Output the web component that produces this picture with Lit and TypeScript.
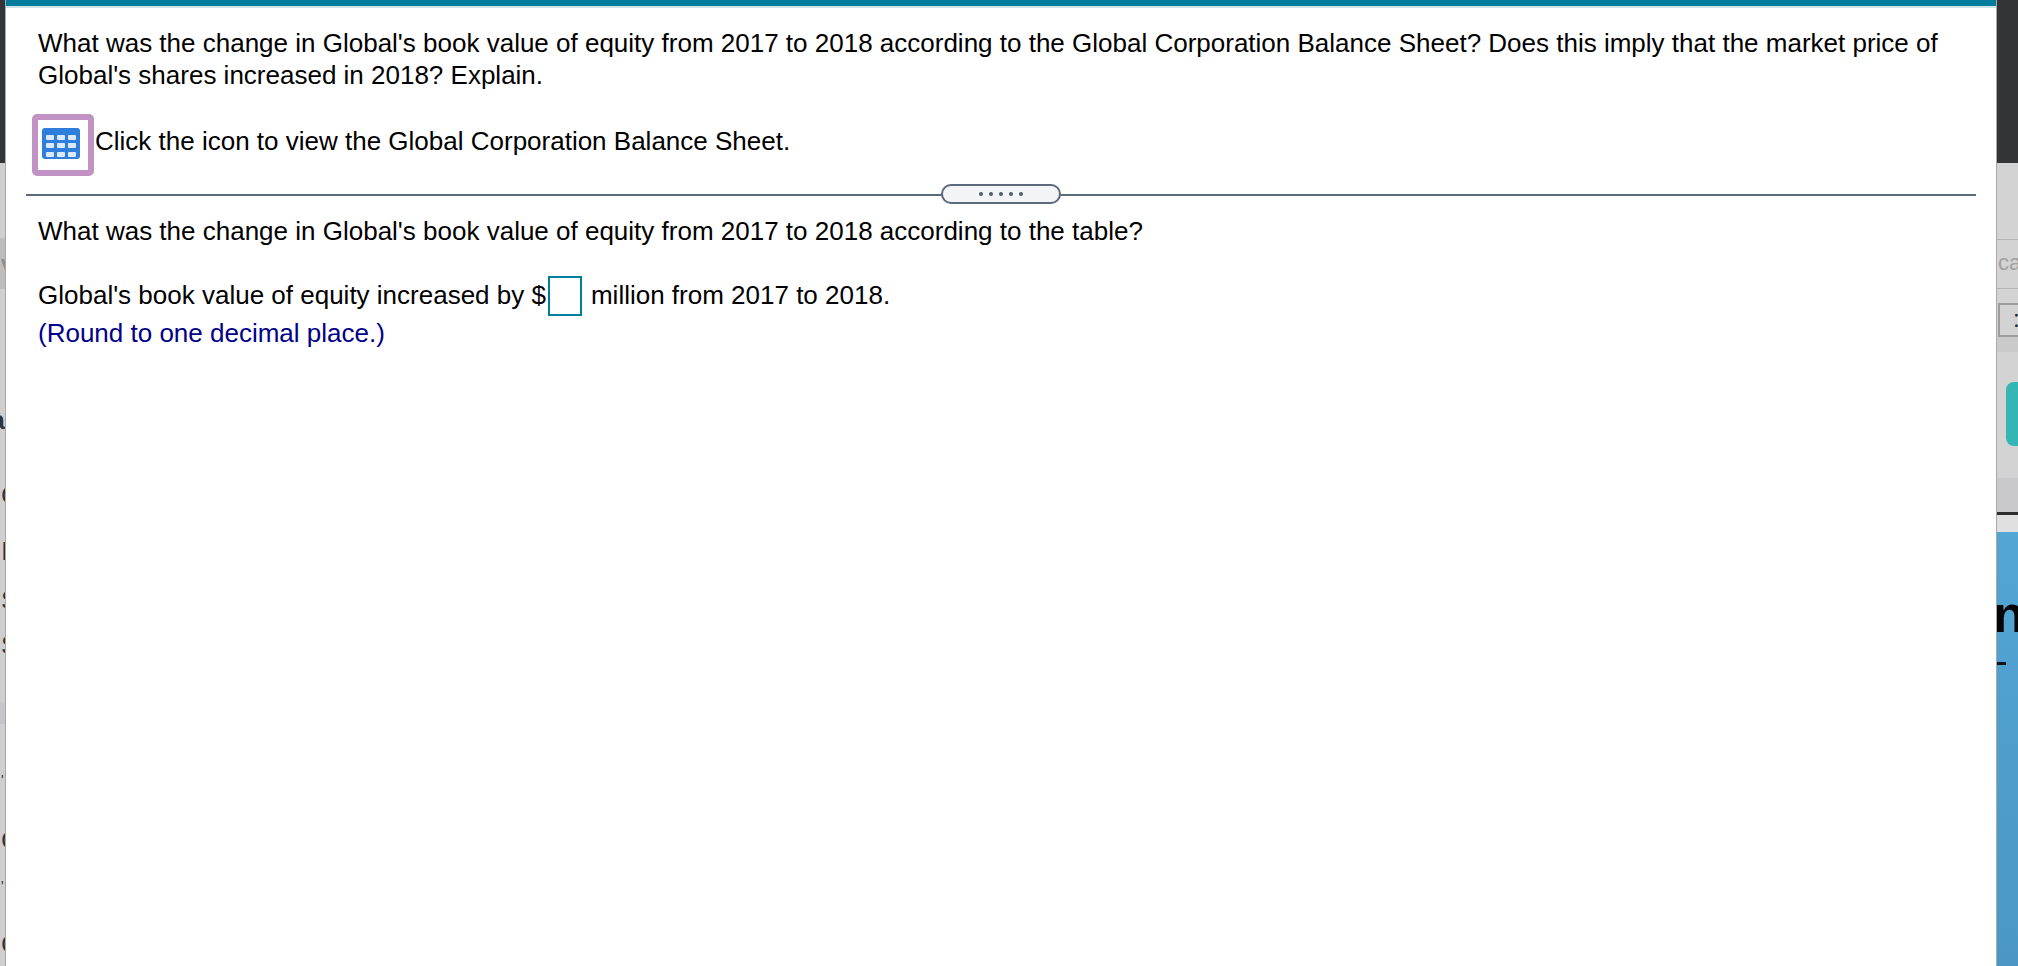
import { LitElement, html, css } from "lit";
import { customElement } from "lit/decorators.js";

@customElement("app-root")
export class AppRoot extends LitElement {
  static styles = css`
    :host {
      display: grid;
      grid-template-columns: 6px 1990px 22px;
      width: 2018px;
      height: 966px;
      overflow: hidden;
      font-family: "Liberation Sans", Arial, sans-serif;
      color: #000;
      background: #fff;
    }

    /* page peeking out behind the dialog */
    .side {
      display: flex;
      flex-direction: column;
      overflow: hidden;
      font-size: 26px;
      line-height: 1;
    }
    .side.left {
      background: #cfcfcf;
      border-right: 1px solid #a9a9a9;
    }
    .side.right {
      background: #d3d3d3;
      border-left: 1px solid #a9a9a9;
    }
    .dark {
      height: 163px;
      flex: none;
      background: #333438;
    }
    .frag {
      flex: none;
      overflow: hidden;
      white-space: nowrap;
    }
    .left .frag {
      color: #2f3340;
      font-size: 26px;
      padding-left: 1px;
    }
    .l-band {
      height: 51px;
      margin-top: 75px;
      background: #bdbdbd;
      color: #8c8c8c !important;
      line-height: 51px;
      font-size: 20px !important;
      font-weight: 700;
    }
    .l-a { height: 34px; margin-top: 114px; line-height: 34px; font-weight: 700; direction: rtl; }
    .l-c { height: 30px; margin-top: 43px; line-height: 30px; }
    .l-i { height: 30px; margin-top: 26px; line-height: 30px; }
    .l-s { height: 30px; margin-top: 19px; line-height: 30px; }
    .l-s2 { height: 30px; margin-top: 15px; line-height: 30px; }
    .l-band2 { height: 21px; margin-top: 43px; background: #c6c6ca; }
    .l-t { height: 12px; margin-top: 47px; line-height: 18px; font-size: 14px !important; }
    .l-c2 { height: 30px; margin-top: 42px; line-height: 30px; }
    .l-t2 { height: 12px; margin-top: 22px; line-height: 18px; font-size: 14px !important; }
    .l-c3 { height: 30px; margin-top: 40px; line-height: 30px; }

    .r-label {
      height: 50px;
      margin-top: 76px;
      padding-left: 1px;
      box-sizing: border-box;
      border-top: 1px solid #b4b4b4;
      border-bottom: 1px solid #b4b4b4;
      color: #a2a2a2;
      font-size: 22px;
      line-height: 46px;
    }
    .r-box {
      height: 34px;
      margin: 14px 0 0 1px;
      border: 2px solid #9c9c9c;
      border-right: none;
      color: #222;
      font-size: 24px;
      line-height: 28px;
      padding-left: 13px;
      box-sizing: border-box;
    }
    .r-strip {
      flex: none;
      height: 15px;
      background: #cacaca;
    }
    .r-teal {
      flex: none;
      height: 64px;
      margin: 30px 0 0 9px;
      background: #35b6b4;
      border-radius: 8px 0 0 8px;
    }
    .r-gap {
      flex: none;
      height: 32px;
    }
    .r-band {
      flex: none;
      height: 37px;
      box-sizing: border-box;
      background: #c8c8cd;
      border-bottom: 3px solid #2e2e2e;
    }
    .r-lite {
      flex: none;
      height: 17px;
      background: #e0e0e0;
    }
    .r-blue {
      flex: 1;
      background: linear-gradient(#52a6d4, #4b96c4);
      color: #050505;
      font-weight: 700;
      font-size: 52px;
      line-height: 1;
      padding-top: 56px;
      white-space: nowrap;
      overflow: hidden;
    }
    .r-blue span {
      display: block;
      margin-left: -4px;
    }
    .r-dash {
      width: 9px;
      height: 3px;
      margin-top: 22px;
      background: #111;
    }

    .dialog {
      display: flex;
      flex-direction: column;
      background: #fff;
      border-top: 6px solid #007c9c;
      font-size: 26px;
      min-width: 0;
    }
    .accent {
      height: 2px;
      flex: none;
      background: #cfe3ea;
    }
    .question {
      padding: 19px 32px 0;
      line-height: 32px;
    }
    .question p,
    .answer p {
      margin: 0;
    }
    .view {
      display: flex;
      align-items: flex-start;
      gap: 1px;
      margin: 23px 0 0 -6px;
    }
    .view span {
      margin-top: 11px;
    }
    .icon-btn {
      width: 62px;
      height: 62px;
      box-sizing: border-box;
      flex: none;
      display: flex;
      align-items: center;
      justify-content: center;
      border: 6px solid #c193c4;
      border-radius: 5px;
      background: #fff;
      padding: 0 4px 3px 0;
    }
    .icon-btn svg {
      display: block;
      filter: blur(0.5px);
    }
    .divider {
      position: relative;
      height: 20px;
      margin: 8px 20px 0;
      display: flex;
      justify-content: center;
    }
    .divider::before {
      content: "";
      position: absolute;
      left: 0;
      right: 0;
      top: 10px;
      height: 2px;
      background: #5b6b7b;
    }
    .pill {
      position: relative;
      width: 120px;
      height: 20px;
      box-sizing: border-box;
      display: flex;
      align-items: center;
      justify-content: center;
      gap: 6px;
      border: 2px solid #5b6b7b;
      border-radius: 10px;
      background: #f3f4f6;
    }
    .pill i {
      width: 4px;
      height: 4px;
      border-radius: 50%;
      background: #4f5b68;
    }
    .answer {
      padding: 11px 32px 0;
      line-height: 32px;
    }
    .fill {
      display: flex;
      align-items: center;
      margin-top: 29px;
      height: 40px;
      white-space: pre;
    }
    .fill span:not(.blank) {
      margin-top: -2px;
    }
    .blank {
      width: 34px;
      height: 40px;
      box-sizing: border-box;
      border: 2px solid #007c9c;
      margin: 0 9px 0 2px;
      background: #fff;
    }
    .hint {
      color: #00008b;
      margin-top: 1px !important;
    }
  `;

  render() {
    return html`
      <div class="side left">
        <div class="dark"></div>
        <div class="frag l-band">v</div>
        <div class="frag l-a">à</div>
        <div class="frag l-c">C</div>
        <div class="frag l-i">I</div>
        <div class="frag l-s">S</div>
        <div class="frag l-s2">S</div>
        <div class="frag l-band2"></div>
        <div class="frag l-t">'</div>
        <div class="frag l-c2">C</div>
        <div class="frag l-t2">'</div>
        <div class="frag l-c3">C</div>
      </div>

      <main class="dialog">
        <div class="accent"></div>
        <section class="question">
          <p>
            What was the change in Global's book value of equity from 2017 to 2018 according to the
            Global Corporation Balance Sheet? Does this imply that the market price of Global's
            shares increased in 2018? Explain.
          </p>
          <div class="view">
            <button class="icon-btn" aria-label="View balance sheet">
              <svg width="38" height="31" viewBox="0 0 38 31">
                <rect width="38" height="31" rx="3" fill="#2d7fdb" />
                <g fill="#dbe9fa">
                  <rect x="4" y="7" width="8" height="5" rx="1" />
                  <rect x="15" y="7" width="8" height="5" rx="1" />
                  <rect x="26" y="7" width="8" height="5" rx="1" />
                  <rect x="4" y="15" width="8" height="5" rx="1" />
                  <rect x="15" y="15" width="8" height="5" rx="1" />
                  <rect x="26" y="15" width="8" height="5" rx="1" />
                  <rect x="4" y="24" width="8" height="5" rx="1" />
                  <rect x="15" y="24" width="8" height="5" rx="1" />
                  <rect x="26" y="24" width="8" height="5" rx="1" />
                </g>
              </svg>
            </button>
            <span>Click the icon to view the Global Corporation Balance Sheet.</span>
          </div>
        </section>

        <div class="divider">
          <div class="pill"><i></i><i></i><i></i><i></i><i></i></div>
        </div>

        <section class="answer">
          <p>What was the change in Global's book value of equity from 2017 to 2018 according to the table?</p>
          <div class="fill">
            <span>Global's book value of equity increased by $</span><span class="blank"></span><span>million from 2017 to 2018.</span>
          </div>
          <p class="hint">(Round to one decimal place.)</p>
        </section>
      </main>

      <div class="side right">
        <div class="dark"></div>
        <div class="frag r-label">ca</div>
        <div class="frag r-box">:</div>
        <div class="r-strip"></div>
        <div class="r-teal"></div>
        <div class="r-gap"></div>
        <div class="r-band"></div>
        <div class="r-lite"></div>
        <div class="r-blue"><span>n</span><div class="r-dash"></div></div>
      </div>
    `;
  }
}
